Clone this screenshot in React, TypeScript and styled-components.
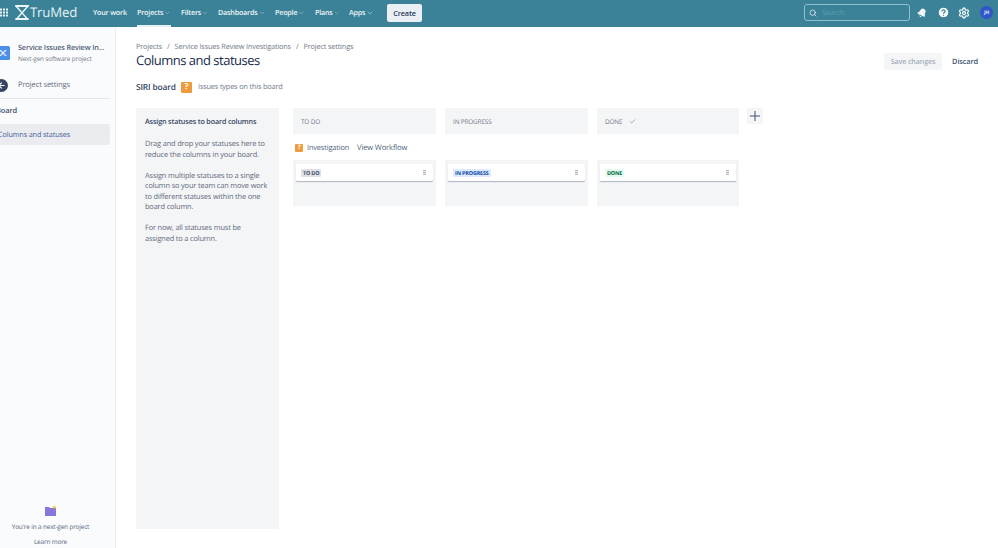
import React from "react";
import styled, { createGlobalStyle } from "styled-components";
import { Search, ChevronDown, Bell, Settings, Check, Plus, ArrowLeft, HelpCircle } from "lucide-react";

const Global = createGlobalStyle`
  html, body { margin: 0; padding: 0; width: 998px; height: 548px; overflow: hidden; background: #fff; }
  body { font-family: "Open Sans", "Noto Sans", "Liberation Sans", sans-serif; color: #42526e; text-rendering: geometricPrecision; letter-spacing: -0.15px; }
  * { box-sizing: border-box; }
`;

const Page = styled.div`
  width: 998px; height: 548px; display: flex; flex-direction: column; overflow: hidden;
`;
const TopBar = styled.header`
  height: 27px; flex: none; background: #3b8299; display: flex; align-items: center; color: #e9f2f5; padding-bottom: 2px;
`;
const AppGrid = styled.svg`
  width: 8px; height: 9px; margin-right: 7px; flex: none;
`;
const LogoMark = styled.svg`
  width: 14px; height: 15px; flex: none; margin-right: 1px;
`;
const LogoText = styled.span`
  font-size: 13.2px; width: 48px; color: #e4f0f3; line-height: 1; margin-right: 15px; white-space: nowrap;
`;
const NavItem = styled.div<{ $active?: boolean; $w: number }>`
  height: 27px; width: ${p => p.$w}px; margin-bottom: -2px; display: flex; align-items: center; gap: 1px; font-size: 7.1px; font-weight: 600; color: #f0f6f8;
  padding-bottom: 2px; margin-right: 10px; white-space: nowrap; flex: none;
  ${p => p.$active ? `box-shadow: inset 0 -2px 0 #e8f2f5;` : ""}
`;
const Create = styled.button`
  width: 35px; height: 18px; margin-left: 2px; border: 0; border-radius: 2px; background: #e9eff5; color: #253858;
  font: 600 7.3px "Open Sans", sans-serif; padding: 0; letter-spacing: -0.15px;
`;
const Spacer = styled.div`flex: 1;`;
const SearchBox = styled.div`
  width: 106px; height: 17px; border: 1px solid #8fc0d0; border-radius: 3px; display: flex; align-items: center; gap: 5px; padding-left: 4px; margin-right: 3px;
`;
const SearchHint = styled.span`font-size: 7.3px; color: #5f9db1;`;
const IconSlot = styled.div<{ $w: number }>`
  width: ${p => p.$w}px; display: flex; justify-content: center; align-items: center; flex: none;
`;
const Avatar = styled.div`
  width: 13px; height: 13px; border-radius: 50%; background: #2f55c8; color: #dfe7fb; font-size: 5px; font-weight: 700;
  display: flex; align-items: center; justify-content: center; margin: 0 5px 0 8px;
`;
const Body = styled.div`flex: 1; display: flex; min-height: 0;`;
const Sidebar = styled.aside`
  width: 116px; flex: none; background: #fafbfc; border-right: 1px solid #eceef1; display: flex; flex-direction: column; overflow: hidden;
`;
const ProjectHead = styled.div`
  display: flex; align-items: center; margin: 16px 0 0 -4px; height: 20px;
`;
const ProjectIcon = styled.svg`width: 14px; height: 14px; flex: none; margin-right: 8px;`;
const ProjectName = styled.div`
  font-size: 7.3px; font-weight: 600; color: #505f79; line-height: 11px; white-space: nowrap;
`;
const ProjectSub = styled.div`font-size: 6.4px; color: #6f7888; line-height: 10px; white-space: nowrap;`;
const BackRow = styled.div`
  display: flex; align-items: center; margin: 9px 10px 0 -5px; height: 26px; font-size: 7.6px; color: #616b7c;
`;
const BackCircle = styled.div`
  width: 13px; height: 13px; border-radius: 50%; background: #344563; color: #fff; display: flex; align-items: center; justify-content: center; margin-right: 10px; flex: none;
`;
const SideRule = styled.div`height: 1px; background: #e4e6ea; margin-right: 5px;`;
const SideGroup = styled.div`
  font-size: 7.5px; font-weight: 600; color: #42526e; margin: 6px 0 0 -4px; height: 12px; line-height: 12px;
`;
const SideActive = styled.div`
  height: 21px; margin: 7px 5px 0 0; background: #ebecf0; color: #4a5f9c; font-size: 7.3px; display: flex; align-items: center; border-radius: 0 2px 2px 0; text-indent: -2px; white-space: nowrap;
`;
const SideFoot = styled.div`
  margin-top: auto; display: flex; flex-direction: column; align-items: center; padding: 0 14px 2px 0;
`;
const FootIcon = styled.svg`width: 13px; height: 12px; margin-bottom: 5px;`;
const FootText = styled.div`font-size: 6.4px; color: #505f79; line-height: 9px; white-space: nowrap;`;
const FootLink = styled.div`font-size: 6.4px; color: #505f79; line-height: 9px; margin-top: 6px; white-space: nowrap;`;
const Main = styled.main`
  flex: 1; padding: 15px 10px 0 20px; display: flex; flex-direction: column; min-width: 0;
`;
const Crumbs = styled.nav`
  display: flex; font-size: 7.3px; color: #6f7888; height: 11px; line-height: 11px; white-space: nowrap;
`;
const Sep = styled.span`margin: 0 5px;`;
const TitleRow = styled.div`display: flex; align-items: center; height: 20px; margin-top: -3px;`;
const Title = styled.h1`
  margin: 0; font-size: 13px; font-weight: 500; letter-spacing: -0.5px; color: #172b4d; line-height: 20px; white-space: nowrap;
`;
const SaveBtn = styled.div`
  margin-left: auto; width: 58px; height: 17px; align-self: flex-end; background: #f4f5f7; color: #a5adba; font-size: 7.2px; font-weight: 600;
  display: flex; align-items: center; justify-content: center; border-radius: 2px;
`;
const DiscardBtn = styled.div`
  width: 46px; text-align: center; margin-top: 3px; font-size: 7.4px; font-weight: 600; color: #42526e;
`;
const BoardLine = styled.div`display: flex; align-items: center; height: 16px; margin-top: 9px;`;
const BoardName = styled.div`font-size: 8.4px; font-weight: 600; color: #344563; white-space: nowrap; width: 45px;`;
const BigQ = styled.div<{ $s: number }>`
  width: ${p => p.$s}px; height: ${p => p.$s}px; background: #ee9a3d; color: #fff; border-radius: 1px; font-size: ${p => p.$s * 0.76}px; font-weight: 700;
  display: flex; align-items: center; justify-content: center; line-height: 1; flex: none;
`;
const BoardHint = styled.div`font-size: 7.3px; color: #6f7888; margin-left: 6px; white-space: nowrap;`;
const Content = styled.div`
  display: grid; margin-top: 13px; align-items: start;
  grid-template-rows: 26px 26px 46px;
  grid-template-columns: 143px 14px 143px 9px 143px 9px 142px 8px 16px;
`;
const Help = styled.section`
  grid-column: 1; grid-row: 1 / span 4; height: 421px; background: #f4f5f7; padding: 9px 8px 0 9px; font-size: 7.4px; line-height: 10.6px; color: #616b7c;
`;
const HelpTitle = styled.div`font-size: 7.2px; font-weight: 600; color: #344563; margin-bottom: 12px; line-height: 10px; white-space: nowrap;`;
const HelpP = styled.p`margin: 0 0 10.4px; white-space: nowrap;`;
const ColHead = styled.div<{ $c: number }>`
  grid-column: ${p => p.$c}; grid-row: 1; height: 26px; background: #f4f5f7; display: flex; align-items: center; padding-left: 8px; font-size: 6.4px; color: #6f7888; gap: 7px;
`;
const AddBtn = styled.div`
  grid-column: 9; grid-row: 1; width: 16px; height: 16px; background: #f4f5f7; display: flex; align-items: center; justify-content: center; color: #344563; border-radius: 2px;
`;
const TypeRow = styled.div`
  grid-column: 3 / span 3; grid-row: 2; height: 26px; display: flex; align-items: center; font-size: 7.4px; color: #505f79; white-space: nowrap; padding: 1px 0 0 2px;
`;
const TypeLabel = styled.span`margin-left: 4px; width: 50px;`;
const TypeLink = styled.span`font-size: 7.6px; font-weight: 500; color: #505f79;`;
const ColBody = styled.div<{ $c: number }>`
  grid-column: ${p => p.$c}; grid-row: 3; height: 46px; background: #f4f5f7; padding: 4px 3px 0;
`;
const StatusCard = styled.div`
  height: 17px; background: #fff; border-radius: 1px; box-shadow: 0 1px 1px rgba(9,30,66,.3); display: flex; align-items: center; justify-content: space-between; padding: 0 7px 0 5px;
`;
const Lozenge = styled.span<{ $bg: string; $fg: string }>`
  background: ${p => p.$bg}; color: ${p => p.$fg}; font-size: 5.4px; font-weight: 700; padding: 0 2px; line-height: 8px; border-radius: 1px; white-space: nowrap;
`;
const Grip = styled.span`
  width: 3px; height: 5px; background: repeating-linear-gradient(to bottom, #b3bac5 0 1px, #e9ebee 1px 2px);
`;

const Nav = ({ label, active, w }: { label: string; active?: boolean; w: number }) => (
  <NavItem $active={active} $w={w}>
    {label}
    <ChevronDown size={8} strokeWidth={1.8} color="#bcd9e2" />
  </NavItem>
);

const Status = ({ c, label, bg, fg }: { c: number; label: string; bg: string; fg: string }) => (
  <ColBody $c={c}>
    <StatusCard>
      <Lozenge $bg={bg} $fg={fg}>{label}</Lozenge>
      <Grip />
    </StatusCard>
  </ColBody>
);

export default function App() {
  return (
    <Page>
      <Global />
      <TopBar>
        <AppGrid viewBox="0 0 8 9" fill="#e9f2f5">
          {[0, 3, 6].flatMap(x => [0.5, 3.5, 6.5].map(y => <rect key={`${x}-${y}`} x={x} y={y} width="2" height="2" />))}
        </AppGrid>
        <LogoMark viewBox="0 0 14 15" fill="none" stroke="#eef6f8" strokeWidth="1.4">
          <path d="M1 1h12L1.5 14h11L1 1z" />
          <path d="M0.5 1h13M0.5 14h13" strokeWidth="1.8" />
        </LogoMark>
        <LogoText>TruMed</LogoText>
        <NavItem $w={34}>Your work</NavItem>
        <Nav label="Projects" active w={34} />
        <Nav label="Filters" w={27} />
        <Nav label="Dashboards" w={47} />
        <Nav label="People" w={30} />
        <Nav label="Plans" w={24} />
        <Nav label="Apps" w={26} />
        <Create>Create</Create>
        <Spacer />
        <SearchBox>
          <Search size={8} strokeWidth={2.2} color="#e9f2f5" />
          <SearchHint>Search</SearchHint>
        </SearchBox>
        <IconSlot $w={17}><Bell size={10} fill="#f1f6f8" color="#f1f6f8" style={{ transform: "rotate(25deg)" }} /></IconSlot>
        <IconSlot $w={26}><HelpCircle size={13} fill="#f5f9fa" color="#3b8299" strokeWidth={2.2} /></IconSlot>
        <IconSlot $w={16}><Settings size={12} color="#f1f6f8" strokeWidth={2.6} /></IconSlot>
        <Avatar>JH</Avatar>
      </TopBar>
      <Body>
        <Sidebar>
          <ProjectHead>
            <ProjectIcon viewBox="0 0 14 14">
              <rect width="14" height="14" rx="1.5" fill="#4c8fe8" />
              <path d="M3 4l3 3-3 3h2l2-2 2 2h2L8 7l3-3H9L7 6 5 4z" fill="#dce9fb" />
            </ProjectIcon>
            <div>
              <ProjectName>Service Issues Review In...</ProjectName>
              <ProjectSub>Next-gen software project</ProjectSub>
            </div>
          </ProjectHead>
          <BackRow>
            <BackCircle><ArrowLeft size={9} strokeWidth={3} /></BackCircle>
            Project settings
          </BackRow>
          <SideRule />
          <SideGroup>Board</SideGroup>
          <SideActive>Columns and statuses</SideActive>
          <SideFoot>
            <FootIcon viewBox="0 0 13 12">
              <path d="M1 2h4l1 1h6v8H1z" fill="#8777d9" />
              <path d="M10.5 0l.7 1.6 1.6.7-1.6.7-.7 1.6-.7-1.6-1.6-.7 1.6-.7z" fill="#f6c244" />
            </FootIcon>
            <FootText>You're in a next-gen project</FootText>
            <FootLink>Learn more</FootLink>
          </SideFoot>
        </Sidebar>
        <Main>
          <Crumbs>
            <span>Projects</span><Sep>/</Sep>
            <span>Service Issues Review Investigations</span><Sep>/</Sep>
            <span>Project settings</span>
          </Crumbs>
          <TitleRow>
            <Title>Columns and statuses</Title>
            <SaveBtn>Save changes</SaveBtn>
            <DiscardBtn>Discard</DiscardBtn>
          </TitleRow>
          <BoardLine>
            <BoardName>SIRI board</BoardName>
            <BigQ $s={11}>?</BigQ>
            <BoardHint>Issues types on this board</BoardHint>
          </BoardLine>
          <Content>
            <Help>
              <HelpTitle>Assign statuses to board columns</HelpTitle>
              <HelpP>Drag and drop your statuses here to<br />reduce the columns in your board.</HelpP>
              <HelpP>Assign multiple statuses to a single<br />column so your team can move work<br />to different statuses within the one<br />board column.</HelpP>
              <HelpP>For now, all statuses must be<br />assigned to a column.</HelpP>
            </Help>
            <ColHead $c={3}>TO DO</ColHead>
            <ColHead $c={5}>IN PROGRESS</ColHead>
            <ColHead $c={7}>DONE <Check size={7} strokeWidth={2} color="#6b778c" /></ColHead>
            <AddBtn><Plus size={16} strokeWidth={1.4} /></AddBtn>
            <TypeRow>
              <BigQ $s={8}>?</BigQ>
              <TypeLabel>Investigation</TypeLabel>
              <TypeLink>View Workflow</TypeLink>
            </TypeRow>
            <Status c={3} label="TO DO" bg="#dfe1e6" fg="#42526e" />
            <Status c={5} label="IN PROGRESS" bg="#deebff" fg="#0747a6" />
            <Status c={7} label="DONE" bg="#e3fcef" fg="#006644" />
          </Content>
        </Main>
      </Body>
    </Page>
  );
}
